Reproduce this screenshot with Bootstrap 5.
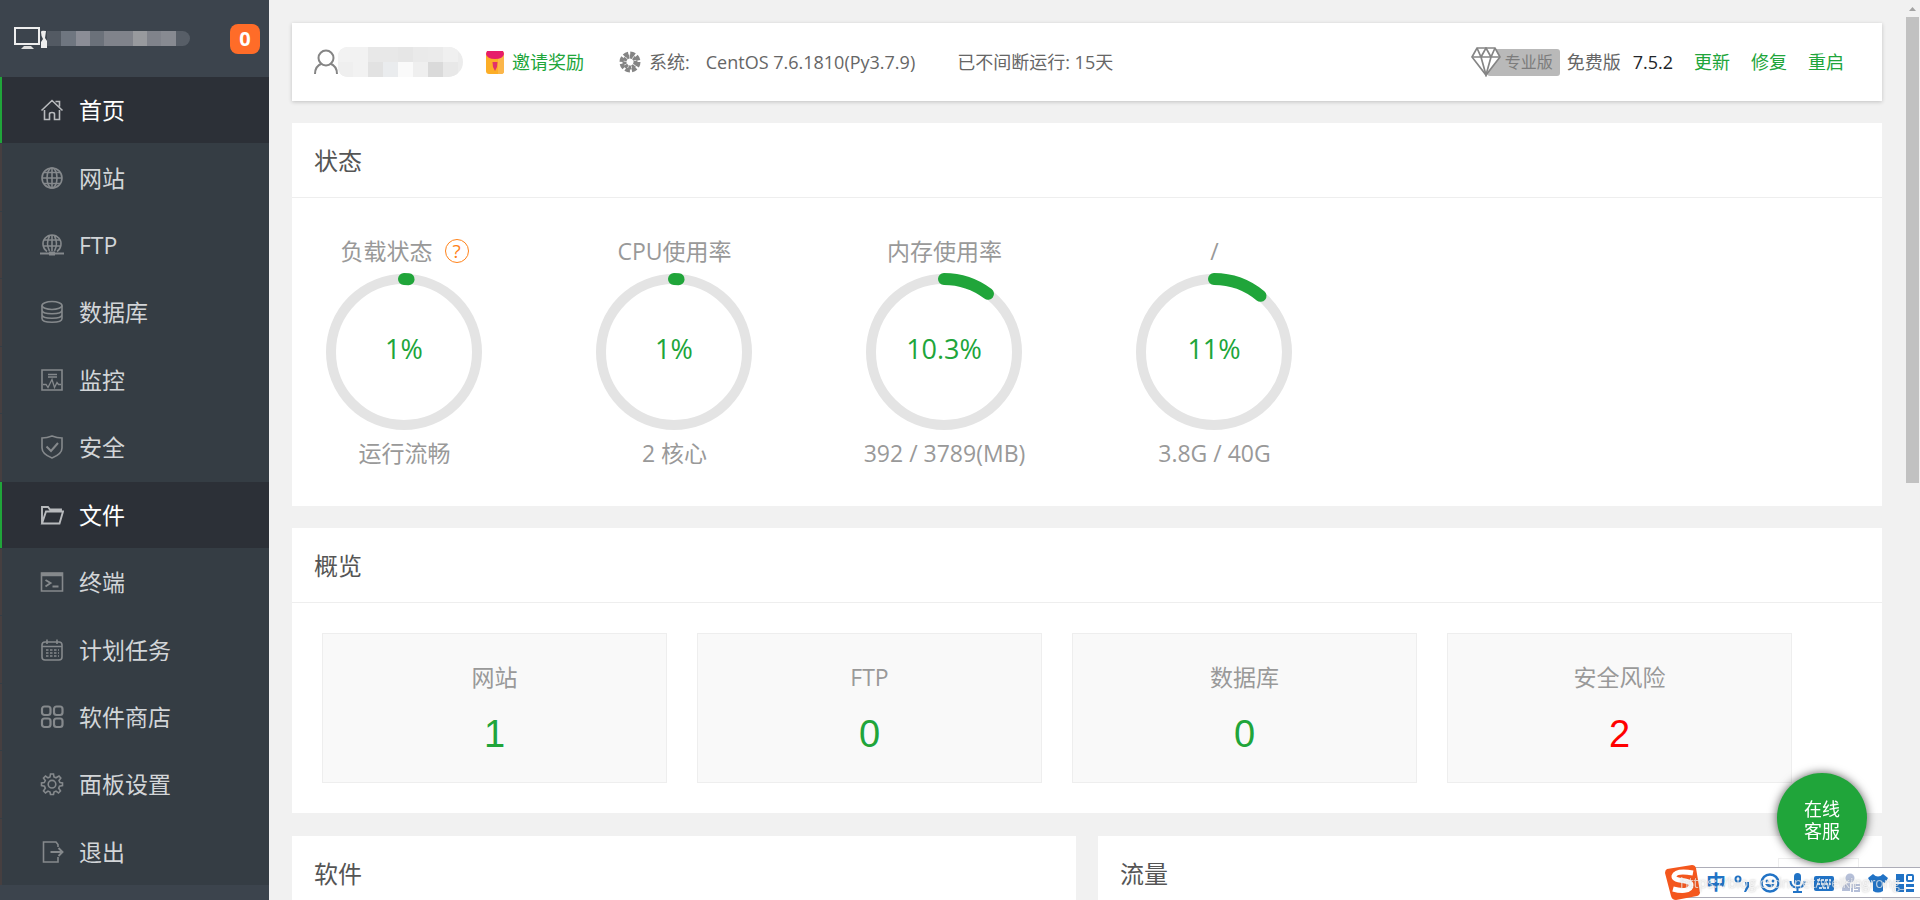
<!DOCTYPE html>
<html lang="zh-CN">
<head>
<meta charset="utf-8">
<meta name="viewport" content="width=device-width, initial-scale=1">
<title>首页</title>
<link href="https://cdn.jsdelivr.net/npm/bootstrap@5.3.0/dist/css/bootstrap.min.css" rel="stylesheet">
<style>
:root{--green:#20a53a;--text:#666}
body{font-family:"Open Sans","Noto Sans CJK SC",sans-serif;font-size:18px;line-height:24px;color:var(--text);background:#f1f1f1}
a{color:var(--green);text-decoration:none}
svg{display:block;flex:none}
/* sidebar */
.side{width:269px;background:#3c444d}
.side-top{height:77px;padding:0 9px 0 14px}
.mosaic{width:143px;height:15px;border-radius:0 8px 8px 0;overflow:hidden}
.mosaic i{flex:1}
.msg-count{width:30px;height:30px;border-radius:8px;background:#ff6c28;color:#fff;font-weight:700;font-size:20px;border:0}
.menu{min-height:808px;gap:1px;background:#353d44}
.menu a{gap:15px;padding-left:38px;border-left:2px solid #463f40;background:#353d44;color:#d2d5d8;font-size:23px;line-height:32px}
.menu svg{width:24px;height:24px;fill:none;stroke:#85898c;stroke-width:1.6}
.menu a.active{background:#2c3037;border-left-color:var(--green);color:#fff}
.menu a.active svg{stroke:#b8babd}
/* content */
.panel{background:#fff}
.page{padding:23px 38px 0 23px;gap:22px}
.infobar{height:78px;padding:0 30px 0 22px;box-shadow:0 1px 4px rgba(0,0,0,.2)}
.user-mask{width:125px;height:30px;border-radius:14px 22px 22px 14px;overflow:hidden;background:#ececec}
.user-mask i{width:15px;height:15px}
.pro-tag{height:27px;padding:0 7px 0 18px;margin-left:-14px;border-radius:3px;background:#b9b9b9;color:#7c7c7c;font-size:16px;line-height:27px}
.panel-title{height:75px;margin:0;padding:0 22px;font-size:24px;font-weight:400;line-height:75px;border-bottom:1px solid #eee;color:#555}
.gauges{gap:45px;padding:36px 0 35px;min-height:308px}
.gauge{width:225px;color:#999;font-size:23px;line-height:34px;text-align:center}
.gauge text{font-size:27px;fill:var(--green);text-anchor:middle}
.ring-bg{fill:none;stroke:#e4e4e4;stroke-width:10}
.ring-val{fill:none;stroke:var(--green);stroke-width:12;stroke-linecap:round}
.help{width:24px;height:24px;border:1px solid #ff8219;border-radius:50%;background:none;color:#ff8219;font-size:19px;line-height:22px;margin-left:12px}
.stats{display:grid;grid-template-columns:repeat(4,1fr);gap:30px;padding:30px 90px 30px 30px}
.stat{height:150px;padding-top:26px;background:#f9f9f9;border:1px solid #eee;color:#999;font-size:23px;line-height:34px;text-align:center}
.stat a{display:block;font:38px/44px "Liberation Sans",sans-serif;margin-top:18px}
.stat a.risk{color:#f00}
.halves{display:grid;grid-template-columns:1fr 1fr;gap:22px;padding-top:1px}
.net-pick{width:81px;height:34px;margin:22px 23px 0 0;border:1px solid #eee;background:#fff;appearance:none}
/* window scroll bar */
.scroller{position:fixed;top:0;right:0;bottom:0;width:15px;background:#f1f1f1;padding:6px 1px 0}
.scroller b{display:block;height:466px;background:#c1c1c1;margin-top:6px}
/* floating pieces */
.service{position:fixed;right:53px;bottom:37px;width:90px;height:90px;border:0;border-radius:50%;background:var(--green);color:#fff;line-height:22px;padding:4px 26px 0;box-shadow:0 0 10px rgba(0,0,0,.65)}
.ime{position:fixed;right:0;bottom:2px;height:31px;width:240px;padding-left:26px;gap:7px;background:#fff;border:solid #adadb8;border-width:1px 0}
.ime svg{width:20px;height:20px;fill:#2173c6}
.ime .ime-logo{position:absolute;left:-17px;top:-5px;width:38px;height:38px}
.ime-zh{width:20px;font-size:20px;font-weight:700;color:#2173c6}
.watermark{position:absolute;left:0;top:3px;font-size:14px;white-space:nowrap;color:rgba(255,255,255,.65);text-shadow:0 0 2px rgba(90,90,90,.4)}
</style>
</head>
<body class="d-flex vh-100 overflow-hidden">

<aside class="side flex-shrink-0">
  <div class="side-top d-flex align-items-center">
    <svg width="26" height="26" viewBox="0 0 26 26"><path d="M1 2h24v16H1z" fill="none" stroke="#eee" stroke-width="2"/><path d="M10 20h7l3 3H7z" fill="#ddd"/></svg>
    <svg width="7" height="18" viewBox="0 0 7 18"><path d="M1 2q0-2 5-1l-1 7 2 3v7H1v-6l2-3q-2-3-2-7z" fill="#eee"/></svg>
    <div class="mosaic d-flex">
      <i style="background:#535a63"></i><i style="background:#6f7680"></i><i style="background:#8b8d96"></i><i style="background:#6b717a"></i><i style="background:#80838b"></i><i style="background:#80838b"></i><i style="background:#989a9e"></i><i style="background:#80838b"></i><i style="background:#878a91"></i><i style="background:#575e67"></i>
    </div>
    <button class="msg-count ms-auto p-0" type="button">0</button>
  </div>
  <nav>
    <ul class="menu list-unstyled d-flex flex-column m-0">
      <li class="flex-fill d-flex"><a href="#" class="active flex-fill d-flex align-items-center"><svg viewBox="0 0 24 24"><path d="M1.500 12.500 12 2.500l10.500 10M15.500 3.500h4v5M4.500 12v9.500h5V16q0-1.500 2.500-1.500t2.500 1.500v5.500h5V12"/></svg>首页</a></li>
      <li class="flex-fill d-flex"><a href="#" class="flex-fill d-flex align-items-center"><svg viewBox="0 0 24 24"><circle cx="12" cy="12" r="10"/><ellipse cx="12" cy="12" rx="5" ry="10"/><path d="M12 2v20M2 12h20M4 6.500h16M4 17.500h16"/></svg>网站</a></li>
      <li class="flex-fill d-flex"><a href="#" class="flex-fill d-flex align-items-center"><svg viewBox="0 0 24 24"><path d="M7 18.500a9 9 0 1 1 10 0M9.500 18q-4-7.500 0-15M14.500 18q4-7.500 0-15M12 1.500V18M4 7h16M3.500 13h17"/><path d="M0 20.500h24" stroke-width="2"/><path d="M9 20.500h6" stroke-width="4"/></svg>FTP</a></li>
      <li class="flex-fill d-flex"><a href="#" class="flex-fill d-flex align-items-center"><svg viewBox="0 0 24 24"><ellipse cx="12" cy="5.500" rx="10" ry="4"/><path d="M2 5.500v13c0 5 20 5 20 0v-13M2 10c0 5 20 5 20 0M2 14.500c0 5 20 5 20 0"/></svg>数据库</a></li>
      <li class="flex-fill d-flex"><a href="#" class="flex-fill d-flex align-items-center"><svg viewBox="0 0 24 24"><path d="M2 2h20v20H2z"/><path d="M8 6.500h9M8 9h9M3 16.500h3l2 3 4-8 2.500 8 2.500-5 1.500 2H21" stroke-width="1.300"/></svg>监控</a></li>
      <li class="flex-fill d-flex"><a href="#" class="flex-fill d-flex align-items-center"><svg viewBox="0 0 24 24"><path d="M12 1Q7 3 2 3v10q0 6 10 10 10-4 10-10V3Q17 3 12 1z"/><path d="m6.500 11.500 4.500 4.500 7-8" stroke-width="2"/></svg>安全</a></li>
      <li class="flex-fill d-flex"><a href="#" class="active flex-fill d-flex align-items-center"><svg viewBox="0 0 24 24"><path d="M2 20V4h6l2 2.500h11v3M2 20.500h17.500l3.500-12H6z" stroke-width="1.900"/></svg>文件</a></li>
      <li class="flex-fill d-flex"><a href="#" class="flex-fill d-flex align-items-center"><svg viewBox="0 0 24 24"><path d="M1.500 3h21v18h-21z"/><path d="M1.500 4.500h21" stroke-width="3.500"/><path d="m5.500 10 5 3-5 3.500M12.500 16.500h6" stroke-width="1.900"/></svg>终端</a></li>
      <li class="flex-fill d-flex"><a href="#" class="flex-fill d-flex align-items-center"><svg viewBox="0 0 24 24"><rect x="2" y="4" width="20" height="18" rx="3"/><path d="M2 8.500h20M7 1.500V6M17 1.500V6"/><path d="M6 12h13M6 15h13M6 18h13" stroke-dasharray="2.500 1.500"/></svg>计划任务</a></li>
      <li class="flex-fill d-flex"><a href="#" class="flex-fill d-flex align-items-center"><svg viewBox="0 0 24 24"><g stroke-width="2.200"><rect x="2" y="1.500" width="8.500" height="8.500" rx="2.500"/><rect x="14" y="1.500" width="8.500" height="8.500" rx="2.500"/><rect x="2" y="13.500" width="8.500" height="8.500" rx="2.500"/><rect x="14" y="13.500" width="8.500" height="8.500" rx="2.500"/></g></svg>软件商店</a></li>
      <li class="flex-fill d-flex"><a href="#" class="flex-fill d-flex align-items-center"><svg viewBox="0 0 24 24"><path d="M10.500 2h3l.5 3 2 .8L19 4l1.800 2L19 8.500l1 2 2.500.5v2.500l-3 .7-.8 2L20.500 19l-2 2-2.500-1.900-2 .9-.5 2.500h-3L10 20l-2-.9L5.500 21l-2-2 1.800-2.800-.8-2L1.500 13.500V11l2.800-.5 1-2L3.500 6l2-2 2.500 1.800 2-.8z"/><circle cx="12" cy="12.200" r="3.800"/></svg>面板设置</a></li>
      <li class="flex-fill d-flex"><a href="#" class="flex-fill d-flex align-items-center"><svg viewBox="0 0 24 24"><path d="M18 7V4.500L16 2H3.500v20H18v-5"/><path d="M10.500 12H22M18.500 8l4 4-4 4" stroke-width="1.900"/></svg>退出</a></li>
    </ul>
  </nav>
</aside>

<main class="page flex-fill d-flex flex-column">
  <header class="infobar panel d-flex align-items-center flex-shrink-0">
    <svg width="24" height="26" viewBox="0 0 24 26" fill="none" stroke="#858585" stroke-width="2"><circle cx="12" cy="9" r="7.500"/><path d="M1 25q0-8 7-10.500M23 25q0-8-7-10.500"/></svg>
    <div class="user-mask d-flex flex-wrap align-content-start">
      <i style="background:#f2f2f2"></i><i style="background:#f2f2f2"></i><i style="background:#e8e8e8"></i><i style="background:#e8e8e8"></i><i style="background:#e6e6e6"></i><i style="background:#eaeaea"></i><i style="background:#ebebeb"></i><i style="background:#f0f0f0"></i><i style="background:#efefef"></i><i style="background:#f2f2f2"></i><i style="background:#e2e2e2"></i><i style="background:#eaecee"></i><i style="background:#fafafa"></i><i style="background:#efefef"></i><i style="background:#dadada"></i><i style="background:#e8e8e8"></i>
    </div>
    <a href="#" class="d-flex align-items-center gap-2" style="margin-left:23px"><svg width="18" height="23" viewBox="0 0 18 23"><rect width="18" height="23" rx="3" fill="#fcae27"/><path d="M12 0h3q3 0 3 3v17q0 3-3 3h-3z" fill="#fbb64a"/><path d="M1 0h16l1 3q-1 5-9 5T0 3z" fill="#e61d6b"/><path d="M6.500 11h5l-.5 5-2 4-2-4z" fill="#e2316a"/></svg>邀请奖励</a>
    <span class="d-flex align-items-center gap-2" style="margin-left:35px"><svg width="22" height="22" viewBox="0 0 22 22" fill="none" stroke="#858585"><circle cx="11" cy="11" r="8.500" stroke-width="4" stroke-dasharray="4.700 1.975"/><circle cx="11" cy="11" r="5.500" stroke-width="4" stroke-dasharray="3 .6"/></svg>系统:</span>
    <span class="ms-3">CentOS 7.6.1810(Py3.7.9)</span>
    <span style="margin-left:42px">已不间断运行: 15天</span>
    <div class="ms-auto d-flex align-items-center">
      <svg width="30" height="30" viewBox="0 0 30 30" class="position-relative" fill="#fff" stroke="#858585" stroke-width="1.700"><path d="M6 1h18l5 9-14 18L1 10z"/><path d="M1 10h28M6 1l4 9 5-9 5 9 4-9M10 10l5 18 5-18" fill="none"/></svg>
      <span class="pro-tag">专业版</span>
      <span style="margin-left:7px">免费版</span>
      <span class="text-dark" style="margin-left:12px">7.5.2</span>
      <a href="#" style="margin-left:21px">更新</a>
      <a href="#" style="margin-left:21px">修复</a>
      <a href="#" class="me-2" style="margin-left:21px">重启</a>
    </div>
  </header>

  <section class="panel flex-shrink-0">
    <h2 class="panel-title">状态</h2>
    <div class="gauges d-flex flex-wrap">
      <div class="gauge">
        <div class="d-flex justify-content-center align-items-center">负载状态<button class="help p-0" type="button">?</button></div>
        <svg class="mx-auto mt-1" width="160" height="160" viewBox="0 0 160 160"><circle class="ring-bg" cx="79" cy="80" r="73"/><path class="ring-val" d="M79 7a73 73 0 0 1 4.600.2"/><text x="79" y="87">1%</text></svg>
        <div class="mt-1">运行流畅</div>
      </div>
      <div class="gauge">
        <div>CPU使用率</div>
        <svg class="mx-auto mt-1" width="160" height="160" viewBox="0 0 160 160"><circle class="ring-bg" cx="79" cy="80" r="73"/><path class="ring-val" d="M79 7a73 73 0 0 1 4.600.2"/><text x="79" y="87">1%</text></svg>
        <div class="mt-1">2 核心</div>
      </div>
      <div class="gauge">
        <div>内存使用率</div>
        <svg class="mx-auto mt-1" width="160" height="160" viewBox="0 0 160 160"><circle class="ring-bg" cx="79" cy="80" r="73"/><path class="ring-val" d="M79 7A73 73 0 0 1 123 21.800"/><text x="79" y="87">10.3%</text></svg>
        <div class="mt-1">392 / 3789(MB)</div>
      </div>
      <div class="gauge">
        <div>/</div>
        <svg class="mx-auto mt-1" width="160" height="160" viewBox="0 0 160 160"><circle class="ring-bg" cx="79" cy="80" r="73"/><path class="ring-val" d="M79 7A73 73 0 0 1 125.500 23.800"/><text x="79" y="87">11%</text></svg>
        <div class="mt-1">3.8G / 40G</div>
      </div>
    </div>
  </section>

  <section class="panel flex-shrink-0">
    <h2 class="panel-title">概览</h2>
    <div class="stats">
      <div class="stat">网站<a href="#">1</a></div>
      <div class="stat">FTP<a href="#">0</a></div>
      <div class="stat">数据库<a href="#">0</a></div>
      <div class="stat">安全风险<a href="#" class="risk">2</a></div>
    </div>
  </section>

  <div class="halves flex-fill">
    <section class="panel"><h2 class="panel-title">软件</h2></section>
    <section class="panel d-flex"><h2 class="panel-title flex-fill">流量</h2><select class="net-pick" aria-label="网卡"><option></option></select></section>
  </div>
</main>

<div class="scroller"><svg width="13" height="5" viewBox="0 0 13 5"><path d="M6.500 1 10 5H3z" fill="#a3a3a3"/></svg><b></b></div>

<button class="service" type="button">在线客服</button>

<div class="ime d-flex align-items-center">
  <svg class="ime-logo" viewBox="0 0 38 38"><path d="M4 6 29 2q3 0 4 3l4 24q0 3-3 4l-21 4q-4 0-5-4L2 10q0-3 2-4z" fill="#f4571d"/><path d="M30 10q-17-3-19 3c-1 6 17 3 17 9 0 7-11 6-18 4" fill="none" stroke="#fff" stroke-width="5"/></svg>
  <span class="ime-zh">中</span>
  <svg viewBox="0 0 20 20"><circle cx="5" cy="6" r="2.500" fill="none" stroke="#2173c6" stroke-width="2"/><path d="M12 9h4v5l-3 5h-2l2-5z"/></svg>
  <svg viewBox="0 0 20 20"><circle cx="10" cy="10" r="8.500" fill="none" stroke="#2173c6" stroke-width="2.500"/><circle cx="7" cy="8" r="1.500"/><circle cx="13" cy="8" r="1.500"/><path d="M5 11q5 7 10 0z"/></svg>
  <svg viewBox="0 0 20 20"><rect x="7" y="0" width="7" height="12" rx="3.500"/><path d="M3.500 8q0 6.500 7 6.500t7-6.500M10.500 15v4M6 19h9" fill="none" stroke="#2173c6" stroke-width="2"/></svg>
  <svg viewBox="0 0 20 20"><rect y="3" width="20" height="15" rx="2"/><path d="M3 7h14M3 11h14M5 15h10" stroke="#fff" stroke-width="1.500" stroke-dasharray="3 1"/></svg>
  <svg viewBox="0 0 20 20"><g fill="#b5bfd8"><circle cx="9" cy="5" r="4.500"/><path d="M1 18q0-8 8-8v8z"/><path d="M11 11v8M19 12h-5v3h4v3h-5" fill="none" stroke="#b5bfd8" stroke-width="2"/></g></svg>
  <svg viewBox="0 0 20 20"><path d="M5 1q5 5 10 0l5 4-3 5-2-1v9q-5 3-10 0V9l-2 1-3-5z"/></svg>
  <svg viewBox="0 0 20 20"><rect x="1" y="1" width="8" height="8"/><rect x="12" y="2" width="6" height="6" rx="1" fill="none" stroke="#2173c6" stroke-width="2"/><rect x="1" y="11" width="8" height="8"/><rect x="11" y="11" width="8" height="3"/><rect x="11" y="16" width="8" height="3"/></svg>
  <span class="watermark">https://blog.csdn.net/weikingrong_</span>
</div>

<script src="https://cdn.jsdelivr.net/npm/bootstrap@5.3.0/dist/js/bootstrap.bundle.min.js"></script>
</body>
</html>
